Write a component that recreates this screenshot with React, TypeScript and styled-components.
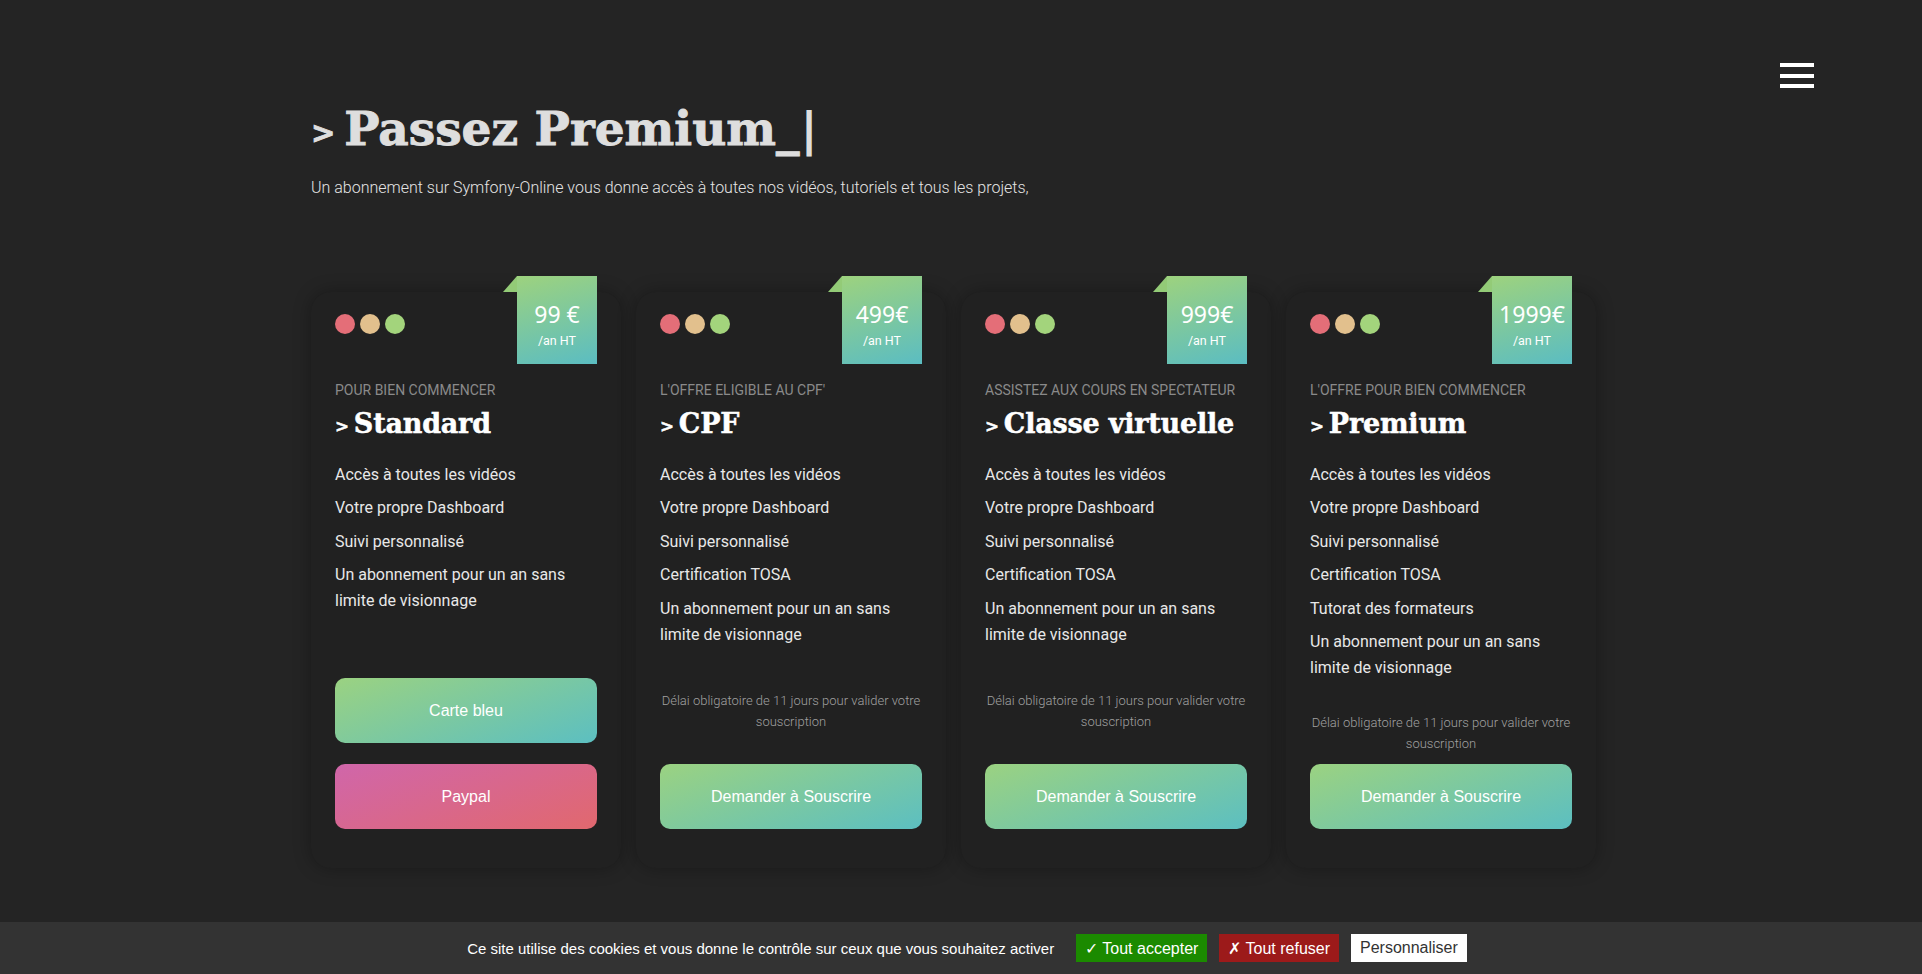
import styled, { createGlobalStyle } from 'styled-components';

const GlobalStyle = createGlobalStyle`
  html, body {
    margin: 0;
    padding: 0;
    background: #242424;
  }
  body {
    font-family: Roboto, 'Liberation Sans', Arial, sans-serif;
    color: #e0e0e0;
  }
  * {
    box-sizing: border-box;
  }
`;

const Page = styled.div`
  min-height: 100vh;
  padding-bottom: 120px;
`;

const Header = styled.header`
  display: flex;
  justify-content: flex-end;
  padding: 63px 108px 0 0;
`;

const MenuButton = styled.button`
  display: flex;
  flex-direction: column;
  gap: 6.5px;
  width: 34px;
  padding: 0;
  background: none;
  border: none;
  cursor: pointer;

  span {
    display: block;
    height: 4px;
    background: #fff;
  }
`;

const Main = styled.main`
  width: 1300px;
  margin: 14px auto 0;
`;

const Title = styled.h1`
  font-family: 'DejaVu Serif', 'Liberation Serif', serif;
  font-weight: 700;
  font-size: 47px;
  line-height: 54px;
  color: #dedede;
  -webkit-text-stroke: 0.9px #dedede;
  margin: 0;
`;

const Prompt = styled.span`
  font-size: 0.62em;
  margin-right: 0.3em;
  vertical-align: 0.08em;
`;

const Cursor = styled.span`
  font-family: 'DejaVu Sans', sans-serif;
  font-weight: 700;
  -webkit-text-stroke: 0;
  margin-left: 1px;
`;

const Intro = styled.p`
  font-size: 16px;
  font-weight: 300;
  line-height: 22px;
  color: #e4e4e4;
  margin: 17px 0 0;
`;

const Grid = styled.div`
  display: grid;
  grid-template-columns: repeat(4, 310px);
  gap: 15px;
  margin-top: 93px;
`;

const Card = styled.article`
  position: relative;
  display: flex;
  flex-direction: column;
  min-height: 576px;
  padding: 22px 24px 39px;
  background: #212121;
  border-radius: 20px;
  box-shadow: 0 0 18px rgba(0, 0, 0, 0.3);
`;

const PriceTag = styled.div`
  position: absolute;
  top: -16px;
  right: 24px;
  width: 80px;
  height: 88px;
  padding-top: 22px;
  display: flex;
  flex-direction: column;
  align-items: center;
  color: #fff;
  background: linear-gradient(165deg, #9dd27e 0%, #5bbdc2 100%);

  &::before {
    content: '';
    position: absolute;
    top: 0;
    left: -14px;
    border-bottom: 16px solid #93cb77;
    border-left: 14px solid transparent;
  }
`;

const Price = styled.span`
  font-family: 'Noto Sans', 'Open Sans', sans-serif;
  font-size: 23px;
  line-height: 32px;
`;

const Period = styled.span`
  font-size: 12.5px;
  line-height: 16px;
  margin-top: 3px;
`;

const Dots = styled.div`
  display: flex;
  gap: 5px;
  margin-bottom: 48.5px;
`;

const Dot = styled.span<{ $color: string }>`
  width: 20px;
  height: 20px;
  border-radius: 50%;
  background: ${({ $color }) => $color};
`;

const Label = styled.p`
  font-size: 14px;
  line-height: 16px;
  color: #8a8a8a;
  text-transform: uppercase;
  margin: 0 0 9px;
  white-space: nowrap;
`;

const PlanName = styled.h2`
  font-family: 'DejaVu Serif', 'Liberation Serif', serif;
  font-weight: 700;
  font-size: 27px;
  line-height: 34px;
  letter-spacing: -0.2px;
  color: #fff;
  -webkit-text-stroke: 0.5px #fff;
  white-space: nowrap;
  margin: 0 0 19px;
`;

const Features = styled.ul`
  list-style: none;
  padding: 0;
  margin: 0 0 31px;
  display: flex;
  flex-direction: column;
  gap: 7.5px;

  li {
    font-size: 16px;
    line-height: 26px;
    color: #e8e8e8;
  }
`;

const Footer = styled.div`
  margin-top: auto;
  display: flex;
  flex-direction: column;
`;

const Note = styled.p<{ $tight?: boolean }>`
  font-size: 13px;
  font-weight: 300;
  line-height: 21px;
  color: #a0a0a0;
  text-align: center;
  margin: 0 -8px ${({ $tight }) => ($tight ? '10px' : '32px')};
`;

const gradients = {
  green: 'linear-gradient(160deg, #9bd281 0%, #5cbfc1 100%)',
  pink: 'linear-gradient(160deg, #d066aa 0%, #e1686e 100%)',
};

const ActionButton = styled.button<{ $variant: 'green' | 'pink' }>`
  height: 65px;
  border: none;
  border-radius: 10px;
  font-family: 'Liberation Sans', Arial, sans-serif;
  font-size: 16px;
  color: #fff;
  cursor: pointer;
  background: ${({ $variant }) => gradients[$variant]};

  & + & {
    margin-top: 21px;
  }
`;

const CookieBar = styled.div`
  position: fixed;
  left: 0;
  right: 0;
  bottom: 0;
  height: 52px;
  padding-left: 12px;
  display: flex;
  align-items: center;
  justify-content: center;
  background: #333;
  font-family: 'Liberation Sans', Arial, sans-serif;
`;

const CookieText = styled.span`
  font-size: 15px;
  color: #fff;
  margin-right: 22px;
`;

const cookieColors = {
  accept: { bg: '#1b8a00', fg: '#fff' },
  refuse: { bg: '#9c1a1a', fg: '#fff' },
  custom: { bg: '#fff', fg: '#333' },
};

const CookieButton = styled.button<{ $kind: keyof typeof cookieColors }>`
  height: 28px;
  padding: 0 9px;
  border: none;
  font-family: 'Liberation Sans', Arial, sans-serif;
  font-size: 16px;
  cursor: pointer;
  background: ${({ $kind }) => cookieColors[$kind].bg};
  color: ${({ $kind }) => cookieColors[$kind].fg};

  & + & {
    margin-left: 12px;
  }
`;

type Plan = {
  price: string;
  label: string;
  name: string;
  features: string[];
  note?: boolean;
  tight?: boolean;
  payment?: boolean;
};

const plans: Plan[] = [
  {
    price: '99 €',
    label: 'Pour bien commencer',
    name: 'Standard',
    features: [
      'Accès à toutes les vidéos',
      'Votre propre Dashboard',
      'Suivi personnalisé',
      'Un abonnement pour un an sans limite de visionnage',
    ],
    payment: true,
  },
  {
    price: '499€',
    label: "L'offre eligible au CPF'",
    name: 'CPF',
    features: [
      'Accès à toutes les vidéos',
      'Votre propre Dashboard',
      'Suivi personnalisé',
      'Certification TOSA',
      'Un abonnement pour un an sans limite de visionnage',
    ],
    note: true,
  },
  {
    price: '999€',
    label: 'Assistez aux cours en spectateur',
    name: 'Classe virtuelle',
    features: [
      'Accès à toutes les vidéos',
      'Votre propre Dashboard',
      'Suivi personnalisé',
      'Certification TOSA',
      'Un abonnement pour un an sans limite de visionnage',
    ],
    note: true,
  },
  {
    price: '1999€',
    label: "L'offre pour bien commencer",
    name: 'Premium',
    features: [
      'Accès à toutes les vidéos',
      'Votre propre Dashboard',
      'Suivi personnalisé',
      'Certification TOSA',
      'Tutorat des formateurs',
      'Un abonnement pour un an sans limite de visionnage',
    ],
    note: true,
    tight: true,
  },
];

function PlanCard({ plan }: { plan: Plan }) {
  return (
    <Card>
      <PriceTag>
        <Price>{plan.price}</Price>
        <Period>/an HT</Period>
      </PriceTag>
      <Dots>
        <Dot $color="#e46e78" />
        <Dot $color="#e2c08d" />
        <Dot $color="#a3d47c" />
      </Dots>
      <Label>{plan.label}</Label>
      <PlanName>
        <Prompt>&gt;</Prompt>
        {plan.name}
      </PlanName>
      <Features>
        {plan.features.map((f) => (
          <li key={f}>{f}</li>
        ))}
      </Features>
      <Footer>
        {plan.note && (
          <Note $tight={plan.tight}>
            Délai obligatoire de 11 jours pour valider votre souscription
          </Note>
        )}
        {plan.payment ? (
          <>
            <ActionButton $variant="green">Carte bleu</ActionButton>
            <ActionButton $variant="pink">Paypal</ActionButton>
          </>
        ) : (
          <ActionButton $variant="green">Demander à Souscrire</ActionButton>
        )}
      </Footer>
    </Card>
  );
}

export default function App() {
  return (
    <Page>
      <GlobalStyle />
      <Header>
        <MenuButton aria-label="Menu">
          <span />
          <span />
          <span />
        </MenuButton>
      </Header>
      <Main>
        <Title>
          <Prompt>&gt;</Prompt>
          Passez Premium_<Cursor>|</Cursor>
        </Title>
        <Intro>
          Un abonnement sur Symfony-Online vous donne accès à toutes nos vidéos, tutoriels et tous les projets,
        </Intro>
        <Grid>
          {plans.map((p) => (
            <PlanCard key={p.name} plan={p} />
          ))}
        </Grid>
      </Main>
      <CookieBar>
        <CookieText>Ce site utilise des cookies et vous donne le contrôle sur ceux que vous souhaitez activer</CookieText>
        <CookieButton $kind="accept">✓ Tout accepter</CookieButton>
        <CookieButton $kind="refuse">✗ Tout refuser</CookieButton>
        <CookieButton $kind="custom">Personnaliser</CookieButton>
      </CookieBar>
    </Page>
  );
}
